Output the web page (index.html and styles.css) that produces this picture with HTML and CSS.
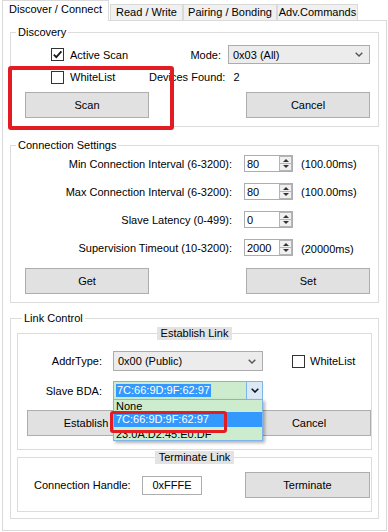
FILE: index.html
```html
<!DOCTYPE html>
<html>
<head>
  <title>Discover / Connect</title>
  <link rel="stylesheet" href="styles.css">
</head>
<body>
  <div class="window">
    <div class="tabs">
      <div class="tab active">Discover / Connect</div>
      <div class="tab tab-rw">Read / Write</div>
      <div class="tab tab-pair">Pairing / Bonding</div>
      <div class="tab tab-adv">Adv.Commands</div>
    </div>

    <div class="panel">
      <fieldset class="group discovery">
        <legend>Discovery</legend>
        <div class="disc-row first">
          <label class="check">
            <span class="box"><svg width="11" height="11" viewBox="0 0 11 11"><polyline points="1.8,5.6 4.3,8.2 9.4,2.3" fill="none" stroke="#1a1a1a" stroke-width="1.8"/></svg></span>
            Active Scan
          </label>
          <span class="mode-label">Mode:</span>
          <div class="select mode-select">
            <span>0x03 (All)</span>
            <svg class="chev" width="8" height="5" viewBox="0 0 8 5"><polyline points="0.7,0.7 4,4 7.3,0.7" fill="none" stroke="#555" stroke-width="1.4"/></svg>
          </div>
        </div>
        <div class="disc-row second">
          <label class="check wide"><span class="box"></span>WhiteList</label>
          <span>Devices Found:</span>
          <span class="count">2</span>
        </div>
        <div class="btn-row">
          <button class="btn">Scan</button>
          <button class="btn">Cancel</button>
        </div>
      </fieldset>

      <fieldset class="group settings">
        <legend>Connection Settings</legend>
        <div class="conn-grid">
          <span class="conn-label">Min Connection Interval (6-3200):</span>
          <div class="spin"><span class="spin-val">80</span><span class="spin-btns"></span></div>
          <span class="conn-unit">(100.00ms)</span>

          <span class="conn-label">Max Connection Interval (6-3200):</span>
          <div class="spin"><span class="spin-val">80</span><span class="spin-btns"></span></div>
          <span class="conn-unit">(100.00ms)</span>

          <span class="conn-label">Slave Latency (0-499):</span>
          <div class="spin"><span class="spin-val">0</span><span class="spin-btns"></span></div>
          <span></span>

          <span class="conn-label">Supervision Timeout (10-3200):</span>
          <div class="spin"><span class="spin-val">2000</span><span class="spin-btns"></span></div>
          <span class="conn-unit low">(20000ms)</span>
        </div>
        <div class="btn-row">
          <button class="btn">Get</button>
          <button class="btn">Set</button>
        </div>
      </fieldset>

      <fieldset class="group link">
        <legend>Link Control</legend>

        <fieldset class="group sub establish">
          <legend>Establish Link</legend>
          <div class="link-row addr">
            <span class="link-label">AddrType:</span>
            <div class="select addr-select">
              <span>0x00 (Public)</span>
              <svg class="chev" width="8" height="5" viewBox="0 0 8 5"><polyline points="0.7,0.7 4,4 7.3,0.7" fill="none" stroke="#555" stroke-width="1.4"/></svg>
            </div>
            <label class="check wl"><span class="box"></span>WhiteList</label>
          </div>
          <div class="link-row bda">
            <span class="link-label">Slave BDA:</span>
            <div class="combo">
              <span class="combo-text"><span class="hl">7C:66:9D:9F:62:97</span></span>
              <span class="combo-btn"><svg width="8" height="5" viewBox="0 0 8 5"><polyline points="0.7,0.7 4,4 7.3,0.7" fill="none" stroke="#111" stroke-width="1.6"/></svg></span>
              <div class="dropdown">
                <div class="opt opt-none">None</div>
                <div class="opt opt-sel">7C:66:9D:9F:62:97</div>
                <div class="opt opt-last">23:0A:D2:45:E0:DF</div>
                <div class="mark small"></div>
              </div>
            </div>
          </div>
          <div class="btn-row inner">
            <button class="btn est-btn">Establish</button>
            <button class="btn">Cancel</button>
          </div>
        </fieldset>

        <fieldset class="group sub terminate">
          <legend>Terminate Link</legend>
          <div class="term-row">
            <span class="term-label">Connection Handle:</span>
            <div class="handle">0xFFFE</div>
            <button class="btn term-btn">Terminate</button>
          </div>
        </fieldset>
      </fieldset>
    </div>

    <!-- red annotation around the scan button -->
    <div class="mark big"></div>
  </div>
</body>
</html>
```

FILE: styles.css
```css
* {
  box-sizing: border-box;
}

body {
  margin: 0;
  font-family: "Liberation Sans", Arial, sans-serif;
  font-size: 11px;
  color: #000;
  background: #fff;
}

.window {
  position: relative;
  width: 388px;
  height: 532px;
  padding-left: 2px;
  overflow: hidden;
  background: #fff;
}

/* tabs */
.tabs {
  display: flex;
  align-items: flex-end;
  height: 21px;
  position: relative;
  z-index: 1;
}

.tab {
  height: 17px;
  border: 1px solid #d9d9d9;
  background: #f0f0f0;
  text-align: center;
  line-height: 15px;
  white-space: nowrap;
}

.tab.active {
  width: 107px;
  height: 21px;
  border-bottom: 0;
  background: #fff;
  line-height: 17px;
}

.tab-rw { width: 73px; margin-left: 1px; }
.tab-pair { width: 94px; }
.tab-adv { width: 81px; }

.panel {
  margin-top: -1px;
  width: 385px;
  height: 511px;
  border: 1px solid #d9d9d9;
  padding: 0 7px;
}

/* group boxes */
fieldset.group {
  margin: 0;
  padding: 0;
  border: 1px solid #dcdcdc;
  min-width: 0;
}

fieldset.group > legend {
  margin-left: 5px;
  padding: 0 2px;
  line-height: 14px;
  height: 14px;
}

.discovery {
  margin-top: 4px !important;
  padding-bottom: 8px !important;
}

.disc-row {
  display: flex;
  align-items: center;
  padding-left: 40px;
}

.disc-row.first {
  margin-top: 6px;
  height: 19px;
  padding-right: 8px;
}

.disc-row.second {
  margin-top: 6px;
  height: 14px;
}

.check {
  display: flex;
  align-items: center;
  gap: 6px;
  white-space: nowrap;
}

.check.wide {
  width: 98px;
}

.box {
  width: 13px;
  height: 13px;
  border: 1px solid #333;
  background: #fff;
  display: flex;
  align-items: center;
  justify-content: center;
}

.mode-label {
  margin-left: auto;
  margin-right: 7px;
}

.count {
  margin-left: 8px;
}

.select {
  height: 19px;
  border: 1px solid #acacac;
  background: #ececec;
  display: flex;
  align-items: center;
  justify-content: space-between;
  padding: 0 6px 0 4px;
}

.mode-select {
  width: 142px;
}

.btn-row {
  display: flex;
  justify-content: space-between;
  margin-top: 8px;
  padding: 0 8px 0 14px;
}

.btn {
  width: 124px;
  height: 26px;
  border: 1px solid #adadad;
  background: #e1e1e1;
  font: inherit;
  color: #000;
  padding: 0;
}

/* connection settings */
.settings {
  margin-top: 11px !important;
  padding-bottom: 8px !important;
}

.conn-grid {
  display: grid;
  grid-template-columns: 221px 61px auto;
  grid-auto-rows: 17px;
  row-gap: 11px;
  align-items: center;
  margin-top: 3px;
}

.conn-label {
  text-align: right;
  white-space: nowrap;
}

.spin {
  margin-left: 12px;
  width: 49px;
  height: 17px;
  border: 1px solid #abadb3;
  background: #fff;
  display: flex;
  align-items: center;
  justify-content: space-between;
  padding: 0 0 0 2px;
}

.spin-btns {
  width: 13px;
  height: 15px;
  border: 1px solid #b5b5b5;
  background:
    linear-gradient(#b5b5b5, #b5b5b5) center / 100% 1px no-repeat,
    #f0f0f0;
  position: relative;
}

.spin-btns::before,
.spin-btns::after {
  content: "";
  position: absolute;
  left: 2.5px;
  border-left: 3px solid transparent;
  border-right: 3px solid transparent;
}

.spin-btns::before {
  top: 2px;
  border-bottom: 3px solid #333;
}

.spin-btns::after {
  bottom: 2px;
  border-top: 3px solid #333;
}

.conn-unit {
  margin-left: 8px;
  white-space: nowrap;
}

.conn-unit.low {
  margin-top: 3px;
}

.settings .btn-row {
  margin-top: 12px;
}

/* link control */
.link {
  margin-top: 8px !important;
  padding: 0 6px 6px !important;
}

fieldset.sub {
  margin-top: 2px;
}

fieldset.sub > legend {
  margin: 0 auto;
  padding: 0 4px;
  background: #e3e3e3;
  line-height: 13px;
  height: 13px;
}

.establish {
  padding-bottom: 13px !important;
}

.link-row {
  display: flex;
  align-items: center;
}

.link-row.addr {
  margin-top: 11px;
  height: 20px;
}

.link-row.bda {
  margin-top: 10px;
  height: 19px;
}

.link-label {
  width: 84px;
  text-align: right;
}

.addr-select {
  margin-left: 11px;
  width: 150px;
  height: 20px;
}

.check.wl {
  margin-left: 29px;
  gap: 5px;
}

.combo {
  position: relative;
  margin-left: 11px;
  width: 150px;
  height: 19px;
  border: 1px solid #7eb4ea;
  background: #cdebcd;
  display: flex;
}

.combo-text {
  flex: 1;
  padding: 2px 0 0 2px;
}

.hl {
  display: inline-block;
  background: #3399ff;
  color: #fff;
  line-height: 13px;
  padding: 0 1px;
}

.combo-btn {
  width: 16px;
  border-left: 1px solid #7eb4ea;
  background: #dbe8f6;
  display: flex;
  align-items: center;
  justify-content: center;
}

.dropdown {
  position: absolute;
  left: -1px;
  top: 17px;
  width: 150px;
  border: 1px solid #7eb4ea;
  background: #cdebcd;
  box-shadow: 2px 2px 3px rgba(0, 0, 0, 0.3);
  z-index: 2;
}

.opt {
  overflow: hidden;
  padding-left: 2px;
  white-space: nowrap;
}

.opt-none {
  height: 12px;
  line-height: 13px;
}

.opt-sel {
  height: 15px;
  line-height: 15px;
  background: #3399ff;
  color: #fff;
}

.opt-last {
  height: 13px;
  line-height: 14px;
}

.btn-row.inner {
  margin-top: 10px;
  padding: 0 0 0 9px;
}

.est-btn {
  padding-right: 6px;
}

.terminate {
  margin-top: 1px !important;
  padding-bottom: 13px !important;
}

.term-row {
  display: flex;
  align-items: center;
  margin-top: 8px;
  height: 26px;
  padding-left: 16px;
  padding-right: 1px;
}

.term-label {
  width: 108px;
  white-space: nowrap;
}

.handle {
  width: 60px;
  height: 19px;
  border: 1px solid #adadad;
  background: #fff;
  text-align: center;
  line-height: 17px;
}

.term-btn {
  margin-left: auto;
  width: 125px;
}

/* red annotation frames */
.mark {
  position: absolute;
  border: 4px solid #e31b23;
  border-radius: 3px;
  z-index: 3;
}

.mark.big {
  left: 8px;
  top: 66px;
  width: 166px;
  height: 64px;
}

.mark.small {
  left: -4px;
  top: 11px;
  width: 117px;
  height: 22px;
  border-width: 3px;
}
```
